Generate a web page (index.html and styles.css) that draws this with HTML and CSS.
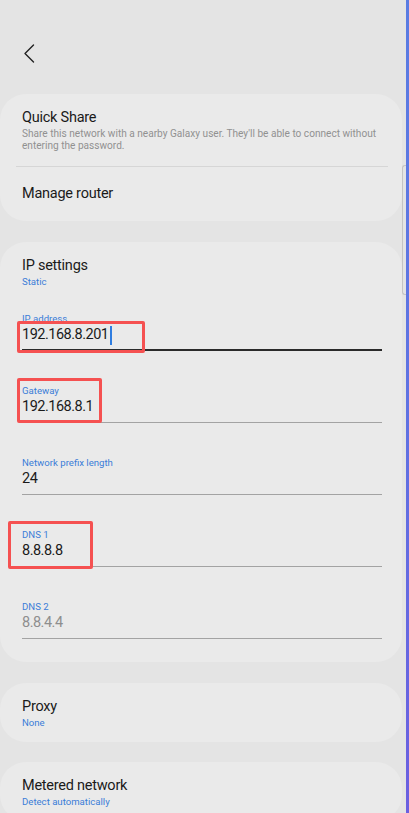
FILE: index.html
```html
<!DOCTYPE html>
<html lang="en">
<head>
<meta charset="utf-8">
<title>Wi-Fi network settings</title>
<link rel="stylesheet" href="styles.css">
</head>
<body>
<div class="screen">
  <div class="content">
    <header class="topbar">
      <button class="back" aria-label="Back">
        <svg width="12" height="19" viewBox="0 0 12 19"><path d="M10.5 1 L2 9.5 L10.5 18" fill="none" stroke="#222" stroke-width="1.4" stroke-linecap="round" stroke-linejoin="round"/></svg>
      </button>
    </header>

    <section class="card">
      <div class="item item-first">
        <div class="title">Quick Share</div>
        <div class="desc">Share this network with a nearby Galaxy user. They'll be able to connect without entering the password.</div>
      </div>
      <div class="divider"></div>
      <div class="item item-single">
        <div class="title">Manage router</div>
      </div>
    </section>

    <section class="card card-ip">
      <div class="item item-head">
        <div class="title">IP settings</div>
        <div class="sub">Static</div>
      </div>
      <div class="fields">
        <div class="field field-active">
          <div class="label">IP address</div>
          <div class="value">192.168.8.201<span class="cursor"></span></div>
        </div>
        <div class="field">
          <div class="label">Gateway</div>
          <div class="value">192.168.8.1</div>
        </div>
        <div class="field">
          <div class="label">Network prefix length</div>
          <div class="value">24</div>
        </div>
        <div class="field">
          <div class="label">DNS 1</div>
          <div class="value">8.8.8.8</div>
        </div>
        <div class="field">
          <div class="label">DNS 2</div>
          <div class="value value-hint">8.8.4.4</div>
        </div>
      </div>
      <div class="mark mark-ip"></div>
      <div class="mark mark-gw"></div>
      <div class="mark mark-dns"></div>
    </section>

    <section class="card card-small">
      <div class="item item-head">
        <div class="title">Proxy</div>
        <div class="sub">None</div>
      </div>
    </section>

    <section class="card card-small">
      <div class="item item-head">
        <div class="title">Metered network</div>
        <div class="sub">Detect automatically</div>
      </div>
    </section>
  </div>
  <div class="edge"></div>
  <div class="scrollbar"></div>
</div>
</body>
</html>
```
FILE: styles.css
```css
* { box-sizing: border-box; }
html, body { margin: 0; padding: 0; }
body {
  background: #e4e4e4;
  font-family: Roboto, "Noto Sans", "Liberation Sans", sans-serif;
  color: #1c1c1c;
}
.screen {
  position: relative;
  display: flex;
  width: 409px;
  height: 813px;
  overflow: hidden;
}
.content {
  flex: 1;
  min-width: 0;
}
.edge {
  width: 3px;
  flex: none;
  background: linear-gradient(180deg, #5a7ce2 0%, #5f72e2 50%, #6b5fe0 100%);
}
.scrollbar {
  position: absolute;
  left: 402px;
  top: 165px;
  width: 4px;
  height: 130px;
  border: 1px solid #c4c4c4;
  border-right: none;
  border-radius: 3px 0 0 3px;
}
.topbar {
  height: 94px;
  padding: 44px 0 0 23px;
}
.back {
  display: block;
  padding: 0;
  border: 0;
  background: none;
  width: 12px;
  height: 19px;
}
.back svg { display: block; }

.card {
  position: relative;
  width: 402px;
  background: #eaeaea;
  border-radius: 26px;
  margin-bottom: 21px;
}
.item { padding: 0 18px 0 22px; }
.item-first { padding-top: 14px; padding-bottom: 14px; }
.item-single {
  height: 54px;
  display: flex;
  align-items: center;
}
.item-head { padding-top: 14px; }
.title {
  font-size: 14.5px;
  line-height: 20px;
  letter-spacing: -0.25px;
  color: #1a1a1a;
}
.desc {
  font-size: 10.1px;
  line-height: 12px;
  color: #919191;
}
.sub {
  font-size: 9.6px;
  line-height: 12px;
  color: #3b7dd8;
}
.divider {
  height: 1px;
  margin: 0 14px 0 16px;
  background: #d6d6d6;
}
.card-ip { padding-bottom: 23px; }
.fields {
  display: flex;
  flex-direction: column;
  gap: 34px;
  padding: 25px 20px 0 22px;
}
.field {
  padding-bottom: 5px;
  border-bottom: 1px solid #a3a3a3;
}
.field-active {
  padding-bottom: 4px;
  border-bottom: 2px solid #2a2a2a;
}
.label {
  font-size: 9.6px;
  line-height: 12px;
  color: #3b7dd8;
}
.value {
  font-size: 14.5px;
  line-height: 20px;
  letter-spacing: -0.5px;
  color: #1a1a1a;
  display: flex;
  align-items: center;
}
.value-hint { color: #8e8e8e; }
.cursor {
  display: inline-block;
  width: 2px;
  height: 19px;
  margin-left: 2px;
  background: #2f7de0;
}
.card-small { height: 59px; margin-bottom: 20px; }

.mark {
  position: absolute;
  border: 3px solid #f55151;
  border-radius: 2px;
}
.mark-ip { left: 17px; top: 79px; width: 128px; height: 32px; }
.mark-gw { left: 17px; top: 136px; width: 85px; height: 45px; }
.mark-dns { left: 8px; top: 279px; width: 85px; height: 48px; }
```
